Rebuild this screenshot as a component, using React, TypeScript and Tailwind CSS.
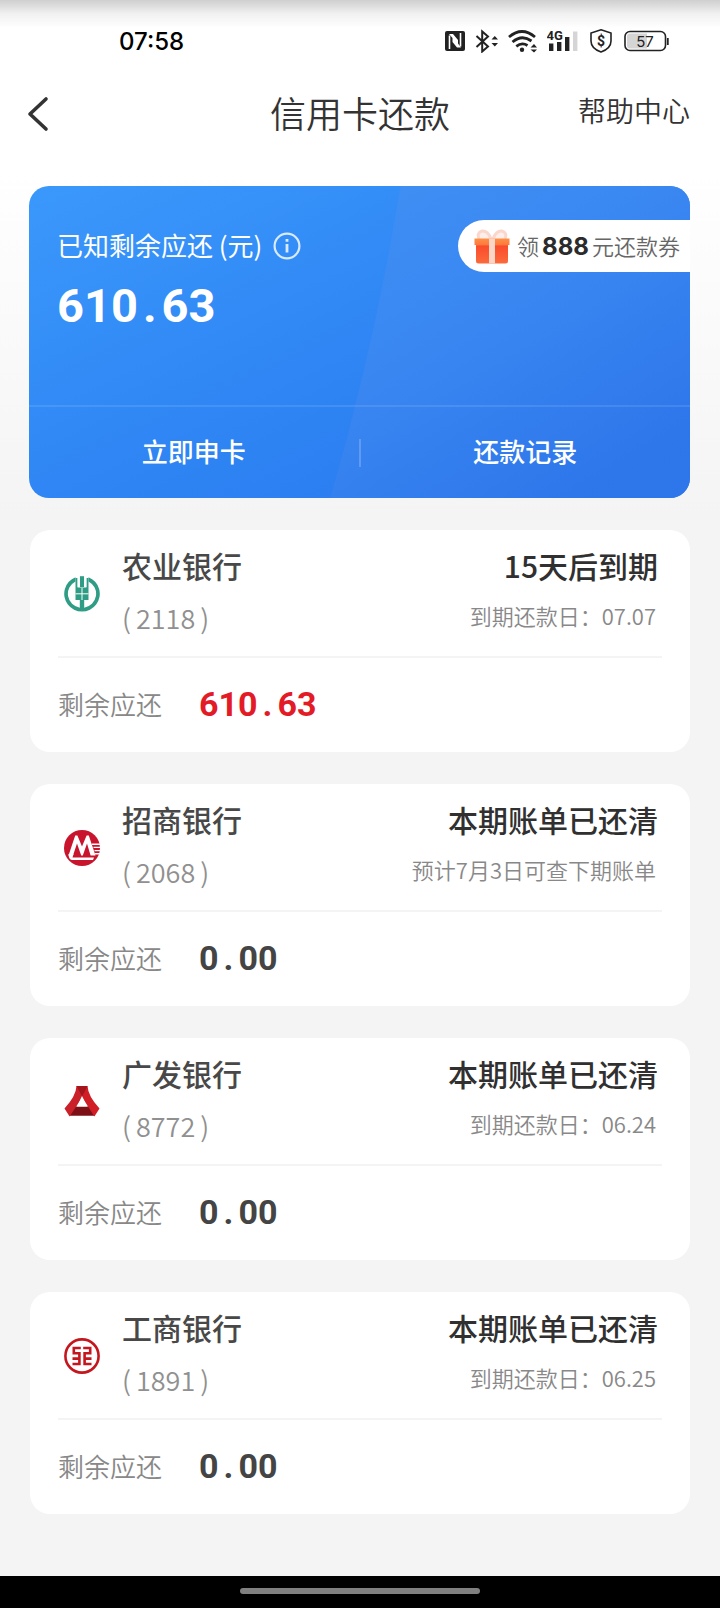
import type { ReactNode } from 'react';

type Bill = {
  bank: string;
  tail: string;
  status: string;
  note: string;
  amount: string;
  due?: boolean;
  logo: ReactNode;
};

const AbcLogo = () => (
  <svg className="mt-0.5 size-9 shrink-0" viewBox="0 0 36 36" aria-hidden="true">
    <path d="M11.500 1.200A17.800 17.800 0 1 0 24.500 1.200V5.400A14 14 0 0 1 20.200 31.700V24H15.800V31.700A14 14 0 0 1 11.500 5.400Z" fill="#2f9d85" />
    <path d="M15.800 0.200H20.200V11H15.800Z" fill="#2f9d85" />
    <path d="M11.500 2H13.600V11.500H22.400V2H24.500V24H11.500Z" fill="#2f9d85" />
    <path d="M18 12V24 M11.500 17.800H24.500" stroke="#fff" strokeWidth="1" />
    <path d="M14.700 0V11 M21.300 0V11" stroke="#fff" strokeWidth="2.200" />
  </svg>
);

const CmbLogo = () => (
  <svg className="mt-0.5 size-9 shrink-0" viewBox="0 0 36 36" aria-hidden="true">
    <circle cx="18" cy="18" r="18" fill="#c8152d" />
    <path d="M28 14.200H36 M29.500 17.400H36 M30.500 20.600H36 M31 23.800H36" stroke="#fff" strokeWidth="1.400" />
    <path d="M4.500 25.500L11.200 5.500H13.400L18 16.500L22.600 5.500H24.800L31.500 25.500H26.600L23 13.500L18.800 25.500H17.200L13 13.500L9 25.500Z" fill="#fff" />
    <path d="M4.500 24H9.500L8.500 27.500H30L29 30H8Q4.500 29.500 4.500 24Z" fill="#fff" />
  </svg>
);

const CgbLogo = () => (
  <svg className="mt-0.5 size-9 shrink-0" viewBox="0 0 36 36" aria-hidden="true">
    <path d="M8.500 22.500H27.500L30.400 31.800H5.600Z" fill="#7d1016" />
    <path d="M12.500 2H23.500Q24 12 35.500 24.500L30.400 32.400L17 11.500Z" fill="#d11d25" />
    <path d="M12.500 2H18.500L20.800 9.500L5.600 32.400L0.500 24.500Q12 12 12.500 2Z" fill="#c9202a" />
    <path d="M12.500 2H23.500L20 9L18 12Z" fill="#a3141b" />
    <path d="M18 12L23 22.500H13Z" fill="#fff" />
  </svg>
);

const IcbcLogo = () => (
  <svg className="mt-0.5 size-9 shrink-0" viewBox="0 0 36 36" aria-hidden="true" fill="none" stroke="#c4161c">
    <circle cx="18" cy="18" r="16.600" strokeWidth="2.600" />
    <path d="M16.800 10H9.800V15.300H15.400V20.600H8.500 M15.400 20.600V26H8.500 M19.200 10H26.200V15.300H20.600V20.600H27.500 M20.600 20.600V26H27.500" strokeWidth="2.600" />
  </svg>
);

const bills: Bill[] = [
  { bank: '农业银行', tail: '2118', status: '15天后到期', note: '到期还款日：07.07', amount: '610.63', due: true, logo: <AbcLogo /> },
  { bank: '招商银行', tail: '2068', status: '本期账单已还清', note: '预计7月3日可查下期账单', amount: '0.00', logo: <CmbLogo /> },
  { bank: '广发银行', tail: '8772', status: '本期账单已还清', note: '到期还款日：06.24', amount: '0.00', logo: <CgbLogo /> },
  { bank: '工商银行', tail: '1891', status: '本期账单已还清', note: '到期还款日：06.25', amount: '0.00', logo: <IcbcLogo /> },
];

function Amount({ value, className }: { value: string; className: string }) {
  const [whole, cents] = value.split('.');
  return (
    <span className={`font-['Roboto',sans-serif] font-bold ${className}`}>
      {whole}
      <span className="mx-[5px]">.</span>
      {cents}
    </span>
  );
}

function StatusBar() {
  return (
    <div className="flex h-[82px] items-center justify-between bg-linear-to-b from-[#cfcfcf] via-[#f1f1f1] via-[14px] to-white to-[28px] pr-[51px] pl-[119px]">
      <span className="pt-0.5 font-['Inter',sans-serif] text-2xl font-medium text-black">07:58</span>
      <div className="flex items-center text-[#222]">
        <svg className="mr-2.5 h-6 w-5" viewBox="445 29 20 24" role="img" aria-label="NFC">
          <rect x="445" y="31" width="20" height="20" rx="2" fill="currentColor" />
          <path d="M449.500 49V35.500 M460.500 33V46.500" stroke="#fff" strokeWidth="1.600" fill="none" />
          <path d="M449 34H453L458 40V43.500L461 47.500H457L452.500 42V38Z" fill="#fff" />
        </svg>
        <svg className="mr-2.5 h-6 w-[23px]" viewBox="475 29 23 24" role="img" aria-label="蓝牙">
          <path d="M476.500 36L488 46.500L482.200 51.500V31.500L488 36.500L476.500 47" stroke="currentColor" strokeWidth="2" fill="none" />
          <path d="M491.500 39.500L494.800 36L498 39.500Z M491.500 43L494.800 46.500L498 43Z" fill="currentColor" />
        </svg>
        <svg className="mr-2.5 h-6 w-[29px]" viewBox="508 29 29 24" role="img" aria-label="无线网络">
          <g fill="none" stroke="currentColor" strokeWidth="2.800">
            <path d="M509 37Q522 26 535 37" />
            <path d="M512.500 42Q522 34 531.500 41" />
            <path d="M516.300 46.300Q522 42 527.500 45.500" />
          </g>
          <circle cx="522" cy="49.700" r="2.200" fill="currentColor" />
          <path d="M530.500 47.500L534 44L537 47.500Z M530.500 49.500L534 52.500L537 49.500Z" fill="currentColor" />
        </svg>
        <svg className="mr-3 h-6 w-[31px]" viewBox="547 29 31 24" role="img" aria-label="移动信号">
          <text x="546.500" y="40" fontSize="13" fontWeight="700" fontFamily="Roboto, sans-serif" fill="currentColor">4G</text>
          <path d="M549 43.500H553.400V51H549Z M557 42H561.400V51H557Z M565 37H569.400V51H565Z" fill="currentColor" />
          <path d="M573 31.500H577.400V51H573Z" fill="#d5d5d5" />
        </svg>
        <svg className="mr-3 h-6 w-[22px]" viewBox="590 29 22 24" role="img" aria-label="支付保护">
          <path d="M601 29.800L611 33V41Q611 48.500 601 52Q591 48.500 591 41V33Z" fill="none" stroke="currentColor" strokeWidth="1.600" />
          <text x="601" y="46" textAnchor="middle" fontSize="14" fontWeight="700" fontFamily="Roboto, sans-serif" fill="currentColor">$</text>
        </svg>
        <svg className="h-6 w-[45px]" viewBox="624 29 45 24" role="img" aria-label="电量">
          <rect x="625" y="31.500" width="40.500" height="19" rx="5" fill="#fff" stroke="currentColor" strokeWidth="1.600" />
          <path d="M630 33.500H647V48.500H630Q627 48.500 627 45.500V36.500Q627 33.500 630 33.500Z" fill="#d5d5d5" />
          <path d="M667.800 38V45" stroke="currentColor" strokeWidth="1.800" />
          <text x="645" y="46.500" textAnchor="middle" fontSize="15" fontFamily="Inter, sans-serif" fill="currentColor">57</text>
        </svg>
      </div>
    </div>
  );
}

function GiftIcon() {
  return (
    <svg className="h-[35px] w-9 shrink-0" viewBox="0 0 36 35" aria-hidden="true">
      <defs>
        <linearGradient id="gift" x1="0" y1="0" x2="0" y2="1">
          <stop offset="0" stopColor="#ff9048" />
          <stop offset="0.25" stopColor="#ff7a3c" />
          <stop offset="0.3" stopColor="#fa4c2c" />
          <stop offset="1" stopColor="#fb6a3c" />
        </linearGradient>
      </defs>
      <path d="M17 10Q14 1.500 8 2Q2.500 3.500 5 10 M19 10Q22 1.500 28 2Q33.500 3.500 31 10" fill="#fdeee9" stroke="#fad6cc" strokeWidth="3" />
      <path d="M0.500 9.500H35.500V16H34V32Q34 34.500 31.500 34.500H4.500Q2 34.500 2 32V16H0.500Z" fill="url(#gift)" />
      <path d="M15 9.500H21V34.500H15Z" fill="#fbd5c6" />
    </svg>
  );
}

function SummaryCard() {
  return (
    <section className="relative -ml-px overflow-hidden rounded-[20px] bg-linear-to-br from-[#3b98fb] via-[#2f86f4] to-[#2a76ee] text-white">
      <svg className="absolute inset-0 size-full" viewBox="0 0 660 312" preserveAspectRatio="none" aria-hidden="true">
        <defs>
          <linearGradient id="sheen" x1="0" y1="0" x2="0.7" y2="1">
            <stop offset="0" stopColor="#4190f4" stopOpacity="0.9" />
            <stop offset="0.5" stopColor="#3a86f1" stopOpacity="0.9" />
            <stop offset="1" stopColor="#2e76ea" stopOpacity="0.9" />
          </linearGradient>
        </defs>
        <path d="M371 0H660V312H301Q345 160 371 0Z" fill="url(#sheen)" />
      </svg>
      <div className="relative">
        <div className="flex h-[219px] justify-between pt-[34px] pl-7">
          <div>
            <div className="flex h-[52px] items-center text-[26px]">
              <span className="pb-1">已知剩余应还 (元)</span>
              <button type="button" aria-label="说明" className="ml-[11px]">
                <svg className="size-7" viewBox="0 0 28 28" fill="none" stroke="#d9eaff" strokeWidth="2.200">
                  <circle cx="14" cy="14" r="12.400" />
                  <path d="M14 12V20.500 M14 7V9.800" strokeWidth="2.800" />
                </svg>
              </button>
            </div>
            <Amount value="610.63" className="block text-[47px] leading-[67px]" />
          </div>
          <a href="#coupon" className="flex h-[52px] items-center rounded-l-full bg-white pr-2.5 pl-4 text-[22px] text-[#666]">
            <GiftIcon />
            <span className="ml-[7px] pb-0.5 font-[350]">
              领<b className="mx-[3px] font-['Inter',sans-serif] text-2xl leading-6 font-bold text-[#2b2b2b]">888</b>元还款券
            </span>
          </a>
        </div>
        <div className="flex h-[93px] items-center border-t-2 border-white/10 text-[26px] font-medium">
          <button type="button" className="flex-1 pb-1">立即申卡</button>
          <span className="h-7 w-0.5 bg-white/20" />
          <button type="button" className="flex-1 pb-1">还款记录</button>
        </div>
      </div>
    </section>
  );
}

function BillCard({ bill }: { bill: Bill }) {
  return (
    <article className="rounded-[20px] bg-white px-7">
      <div className="flex h-[128px] items-center border-b-2 border-[#f4f4f4] pl-1.5">
        {bill.logo}
        <div className="ml-[22px] pb-1">
          <h2 className="text-[30px] leading-[54px] font-medium text-[#484848]">{bill.bank}</h2>
          <p className="text-[27px] leading-[52px] font-[350] text-[#909090]">
            (<span className="mx-[5px]">{bill.tail}</span>)
          </p>
        </div>
        <div className="ml-auto pr-1 pb-2.5 text-right">
          <p className="text-[30px] leading-[54px] font-medium text-[#303030]">{bill.status}</p>
          <p className="pr-0.5 text-[22px] leading-[46px] font-[350] text-[#888]">{bill.note}</p>
        </div>
      </div>
      <div className="flex h-[94px] items-center">
        <span className="w-[141px] pb-1 text-[26px] font-[350] text-[#888]">剩余应还</span>
        <Amount value={bill.amount} className={`pb-0.5 text-[34px] ${bill.due ? 'text-[#e31b26]' : 'text-[#444]'}`} />
      </div>
    </article>
  );
}

export default function App() {
  return (
    <div className="flex min-h-screen flex-col bg-linear-to-b from-white from-[170px] to-[#f4f4f4] to-[520px] font-['Noto_Sans_CJK_SC',sans-serif]">
      <StatusBar />
      <header className="grid h-16 grid-cols-[1fr_auto_1fr] items-center px-[30px] text-[#333]">
        <button type="button" aria-label="返回" className="-ml-1 justify-self-start">
          <svg className="h-9 w-6" viewBox="0 0 24 36" fill="none" stroke="#333" strokeWidth="3.600" strokeLinecap="round" strokeLinejoin="round">
            <path d="M20 3L4 18L20 33" />
          </svg>
        </button>
        <h1 className="pb-1 text-4xl font-[350]">信用卡还款</h1>
        <a href="#help" className="justify-self-end pb-2 text-[28px] font-[350]">帮助中心</a>
      </header>
      <main className="flex flex-col gap-8 px-[30px] pt-10 pb-[62px]">
        <SummaryCard />
        {bills.map((bill) => (
          <BillCard key={bill.tail} bill={bill} />
        ))}
      </main>
      <footer className="mt-auto flex h-8 items-center justify-center bg-black pb-0.5">
        <span className="h-1.5 w-60 rounded-full bg-[#808080]" />
      </footer>
    </div>
  );
}
